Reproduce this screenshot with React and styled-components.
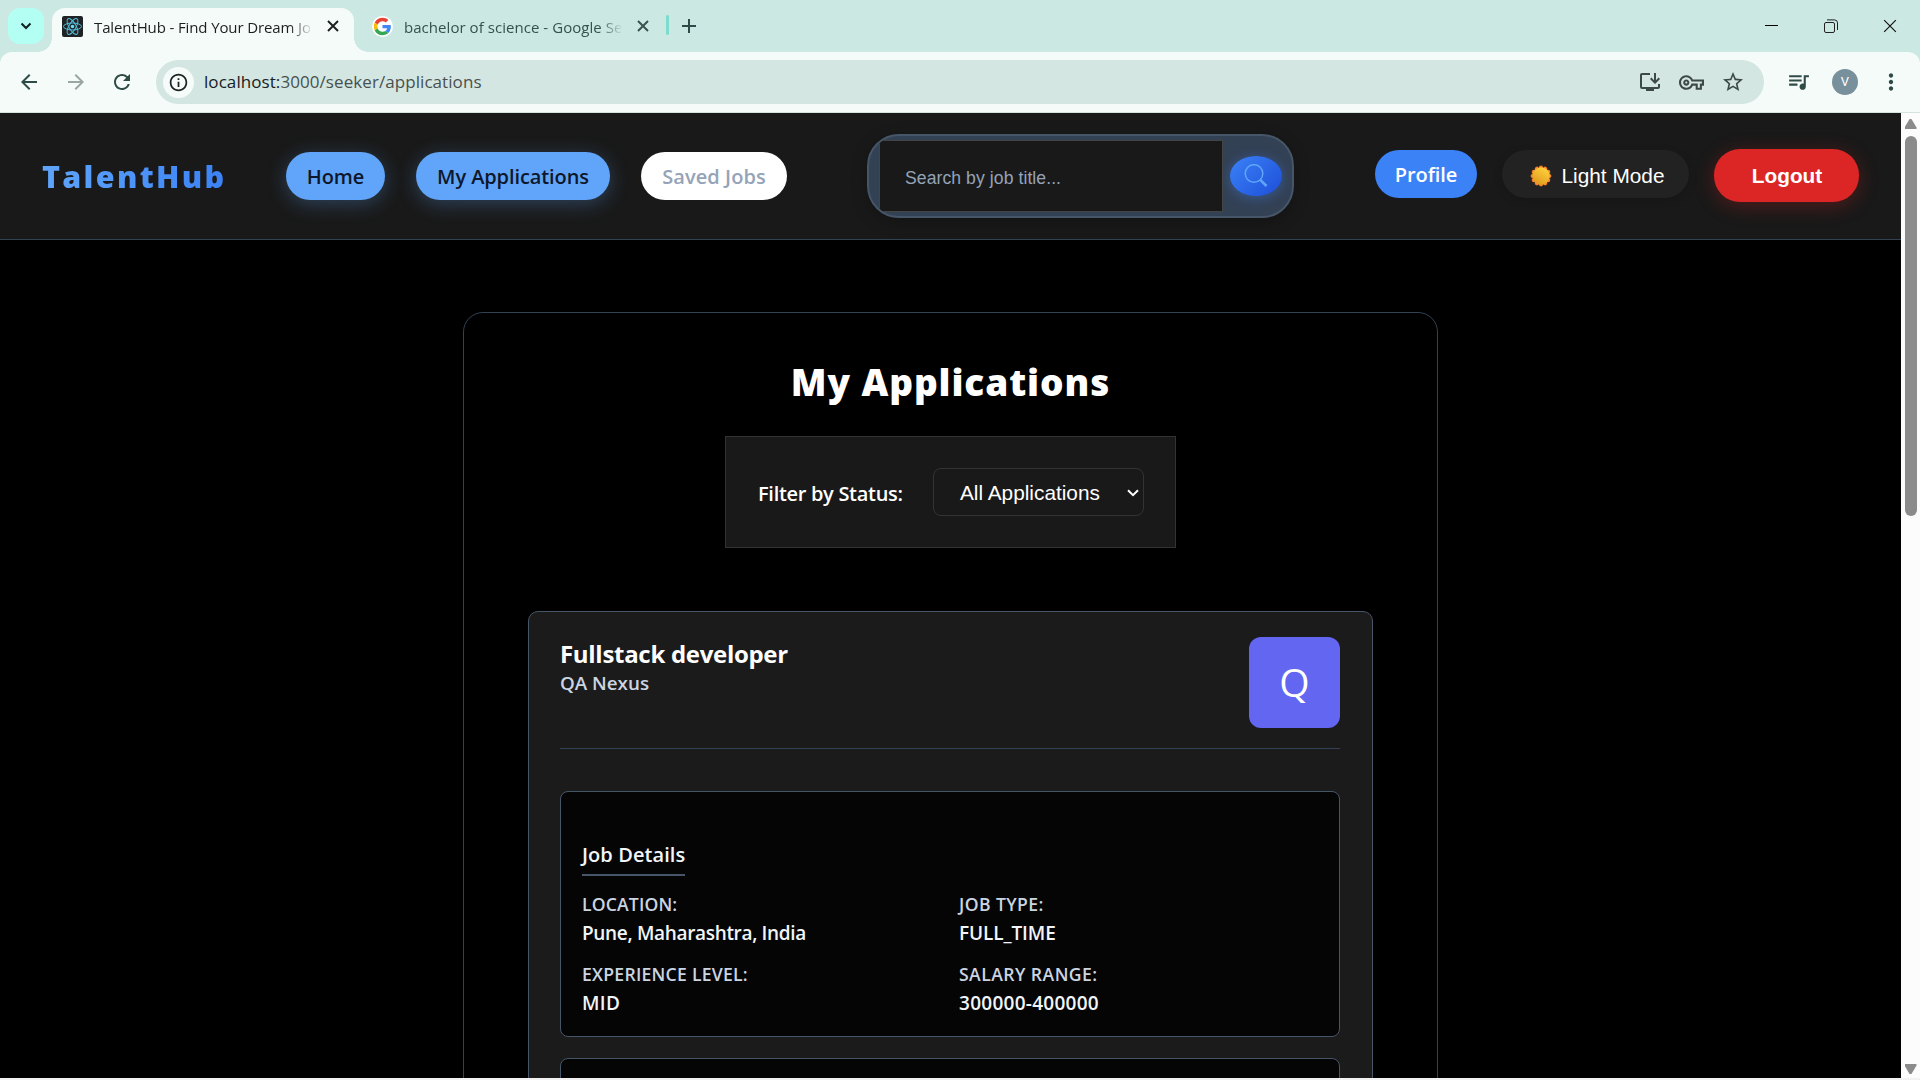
import React from "react";
import styled, { createGlobalStyle } from "styled-components";
import {
  MdArrowBack,
  MdArrowForward,
  MdRefresh,
  MdInfoOutline,
  MdInstallDesktop,
  MdOutlineVpnKey,
  MdStarBorder,
  MdQueueMusic,
  MdMoreVert,
} from "react-icons/md";

const ui = `"Segoe UI", "Open Sans", "Noto Sans", sans-serif`;
const arial = `Arial, "Liberation Sans", sans-serif`;

const GlobalStyle = createGlobalStyle`
  * { box-sizing: border-box; }
  html, body { margin: 0; padding: 0; overflow: hidden; }
  body { font-family: ${ui}; background: #f2f2f2; }
  button, input { font: inherit; margin: 0; }
  svg { display: block; flex: none; }
`;

const Window = styled.div`
  display: flex;
  flex-direction: column;
  width: 1920px;
  height: 1080px;
  overflow: hidden;
  background: #cce8e2;
`;

/* ---- tab strip ---- */
const TabStrip = styled.div`
  display: flex;
  align-items: flex-start;
  height: 52px;
  padding: 8px 0 0 8px;
  background: #cce8e2;
`;
const TabSearch = styled.button`
  display: grid;
  place-items: center;
  width: 36px;
  height: 36px;
  border: 0;
  padding: 0;
  border-radius: 12px;
  background: #b3fff3;
`;
const Tab = styled.div`
  position: relative;
  display: flex;
  align-items: center;
  height: ${(p) => (p.$active ? 44 : 36)}px;
  width: ${(p) => (p.$active ? 302 : 312)}px;
  margin-left: ${(p) => (p.$active ? 8 : 0)}px;
  padding: ${(p) => (p.$active ? "0 0 8px 10px" : "0 0 0 18px")};
  border-radius: 13px 13px 0 0;
  color: ${(p) => (p.$active ? "#1b1f1e" : "#37514c")};
  background: ${(p) => (p.$active ? "#f5fbf9" : "transparent")};
  &::before,
  &::after {
    content: "";
    display: ${(p) => (p.$active ? "block" : "none")};
    position: absolute;
    bottom: 0;
    width: 14px;
    height: 14px;
  }
  &::before {
    left: -14px;
    background: radial-gradient(circle at 0 0, transparent 13.5px, #f5fbf9 14px);
  }
  &::after {
    right: -14px;
    background: radial-gradient(circle at 100% 0, transparent 13.5px, #f5fbf9 14px);
  }
`;
const TabTitle = styled.span`
  width: 217px;
  margin: 1px 16px 0 11px;
  overflow: hidden;
  white-space: nowrap;
  font-size: 15px;
  line-height: 22px;
  letter-spacing: ${(p) => p.$tracking}px;
  mask-image: linear-gradient(90deg, #000 195px, transparent 219px);
`;
const TabDivider = styled.div`
  width: 3px;
  height: 20px;
  margin: 7px 0 0 0;
  border-radius: 2px;
  background: #7bdccf;
`;
const NewTab = styled.div`
  margin: 11px 0 0 13px;
`;
const WindowButtons = styled.div`
  display: flex;
  align-items: center;
  gap: 45.5px;
  margin: 11px 23px 0 auto;
`;

/* ---- toolbar ---- */
const Toolbar = styled.div`
  display: flex;
  align-items: center;
  height: 61px;
  padding: 0 0 1px 17px;
  border-radius: 12px 12px 0 0;
  border-bottom: 1px solid #d5e3e0;
  background: #f5fbf9;
  color: #2f4b47;
`;
const NavIcons = styled.div`
  display: flex;
  align-items: center;
  gap: 22.5px;
  width: 139px;
`;
const AddressBar = styled.div`
  display: flex;
  align-items: center;
  width: 1608px;
  height: 44px;
  padding: 1px 19px 0 7px;
  border-radius: 22px;
  background: #d3e6e1;
  color: #3c4947;
`;
const SiteInfo = styled.span`
  display: grid;
  place-items: center;
  width: 31px;
  height: 31px;
  border-radius: 50%;
  background: #f5fbf9;
  color: #1c2423;
`;
const Url = styled.span`
  margin-left: 10px;
  font-size: 17px;
  line-height: 24px;
  letter-spacing: 0.07px;
  color: #48514f;
  b {
    font-weight: 400;
    color: #16201e;
  }
`;
const AddressActions = styled.div`
  display: flex;
  align-items: center;
  gap: 17px;
  margin-left: auto;
`;
const Avatar = styled.span`
  display: grid;
  place-items: center;
  width: 26px;
  height: 26px;
  margin: 0 20px 0 21px;
  border-radius: 50%;
  background: #78909c;
  color: #fff;
  font: 13px/26px Roboto, sans-serif;
`;
const MusicIcon = styled(MdQueueMusic)`
  margin-left: 22px;
`;

/* ---- page area ---- */
const Viewport = styled.div`
  display: flex;
  height: 965px;
`;
const Page = styled.div`
  display: flex;
  flex-direction: column;
  width: 1901px;
  overflow: hidden;
  background: #000;
`;
const ScrollBar = styled.div`
  display: flex;
  flex-direction: column;
  align-items: center;
  width: 19px;
  padding: 6px 0 4px;
  background: #fcfcfc;
`;
const Arrow = styled.div`
  width: 12px;
  height: 10px;
  background: #8b8b8b;
  clip-path: ${(p) =>
    p.$down
      ? "polygon(0 0, 100% 0, 100% 15%, 58% 100%, 42% 100%, 0 15%)"
      : "polygon(42% 0, 58% 0, 100% 85%, 100% 100%, 0 100%, 0 85%)"};
`;
const Thumb = styled.div`
  width: 12px;
  height: 380px;
  margin: 7px 0 auto;
  border-radius: 6px;
  background: #8b8b8b;
`;
const WindowEdge = styled.div`
  height: 2px;
  background: #f2f2f2;
`;

/* ---- site header ---- */
const Header = styled.header`
  display: flex;
  align-items: center;
  height: 127px;
  flex: none;
  padding: 0 42px;
  border-bottom: 1px solid #334155;
  background: #191919;
`;
const Logo = styled.div`
  width: 244px;
  font-size: 30.5px;
  font-weight: 800;
  line-height: 44px;
  letter-spacing: 2.3px;
  span {
    background: linear-gradient(90deg, #60a5fa, #3b82f6);
    background-clip: text;
    -webkit-background-clip: text;
    color: transparent;
  }
`;
const NavPills = styled.nav`
  display: flex;
  gap: 31px;
`;
const NavPill = styled.a`
  display: flex;
  justify-content: center;
  width: ${(p) => p.$w}px;
  height: 48px;
  border-radius: 24px;
  font-size: 20px;
  font-weight: 600;
  line-height: 49px;
  white-space: nowrap;
  letter-spacing: ${(p) => p.$tracking}px;
  color: ${(p) => (p.$muted ? "#94a3b8" : "#0f172a")};
  background: ${(p) => (p.$muted ? "#fff" : "#60a5fa")};
  box-shadow: ${(p) => (p.$muted ? "none" : "0 4px 20px rgba(96, 165, 250, 0.3)")};
`;
const SearchBox = styled.div`
  display: flex;
  align-items: center;
  width: 427px;
  height: 84px;
  margin-left: 80px;
  padding: 0 9px 0 10px;
  border: 2px solid #475569;
  border-radius: 32px;
  overflow: hidden;
  background: #334155;
  box-shadow: 0 4px 16px rgba(0, 0, 0, 0.25);
`;
const SearchInput = styled.input`
  width: 344px;
  height: 72px;
  padding: 4px 25px 0;
  border: 1px solid #444;
  background: #191919;
  font-family: ${arial};
  font-size: 17.6px;
  letter-spacing: 0.07px;
  color: #fff;
  outline: none;
  &::placeholder {
    color: #94a3b8;
    opacity: 1;
  }
`;
const SearchButton = styled.button`
  display: grid;
  place-items: center;
  width: 52px;
  height: 40px;
  margin-left: 7px;
  padding: 0;
  border: 0;
  border-radius: 50%;
  background: linear-gradient(135deg, #3b82f6, #1d4ed8);
  box-shadow: 0 2px 12px rgba(59, 130, 246, 0.4);
`;
const HeaderActions = styled.div`
  display: flex;
  align-items: center;
  gap: 25px;
  margin-left: auto;
`;
const Profile = styled.a`
  width: 102px;
  height: 48px;
  margin-bottom: 4px;
  border-radius: 24px;
  text-align: center;
  font-size: 20px;
  font-weight: 600;
  line-height: 49px;
  letter-spacing: -0.1px;
  color: #fff;
  background: #3b82f6;
`;
const ThemeToggle = styled.button`
  display: flex;
  align-items: center;
  justify-content: center;
  gap: 10px;
  width: 187px;
  height: 48px;
  margin-bottom: 4px;
  padding: 4px 0 0 3px;
  border: 0;
  border-radius: 24px;
  font-family: ${arial};
  font-size: 20.8px;
  white-space: nowrap;
  color: #fff;
  background: #222;
  box-shadow: 0 2px 8px rgba(0, 0, 0, 0.15);
`;
const Logout = styled.button`
  width: 145px;
  height: 53px;
  margin-bottom: 1px;
  padding: 1px 0 0 1px;
  border: 0;
  border-radius: 26px;
  font-family: ${arial};
  font-size: 20.8px;
  font-weight: 700;
  color: #fff;
  background: #dc2626;
  box-shadow: 0 4px 20px rgba(220, 38, 38, 0.3);
`;

/* ---- applications ---- */
const Panel = styled.main`
  display: flex;
  flex-direction: column;
  align-items: center;
  width: 975px;
  height: 900px;
  flex: none;
  margin: 72px 0 0 463px;
  border: 1px solid #334155;
  border-radius: 20px;
`;
const PageTitle = styled.h1`
  margin: 41px 0 0;
  font-size: 37px;
  font-weight: 800;
  line-height: 56px;
  letter-spacing: 0.9px;
  color: #fff;
`;
const FilterBar = styled.div`
  display: flex;
  align-items: center;
  width: 451px;
  height: 112px;
  flex: none;
  margin-top: 26px;
  padding: 0 31px 0 32px;
  border: 1px solid #333;
  background: #191919;
`;
const FilterLabel = styled.label`
  width: 175px;
  padding-top: 2px;
  font-size: 20px;
  font-weight: 600;
  white-space: nowrap;
  letter-spacing: -0.3px;
  color: #fff;
`;
const FilterSelect = styled.div`
  display: flex;
  align-items: center;
  justify-content: space-between;
  width: 211px;
  height: 48px;
  padding: 2px 4px 0 26px;
  border: 1px solid #333;
  border-radius: 8px;
  font-family: ${arial};
  font-size: 20.8px;
  white-space: nowrap;
  color: #fff;
`;
const Card = styled.article`
  width: 845px;
  height: 600px;
  flex: none;
  margin-top: 63px;
  padding: 25px 32px 0 31px;
  border: 1px solid #475569;
  border-radius: 10px;
  background: #1b1b1b;
`;
const CardHead = styled.div`
  display: flex;
  justify-content: space-between;
  height: 112px;
  border-bottom: 1px solid #334155;
`;
const JobTitle = styled.h2`
  margin: 1px 0 0;
  font-size: 24px;
  font-weight: 700;
  line-height: 32px;
  letter-spacing: -0.3px;
  color: #fff;
`;
const Company = styled.div`
  font-size: 18.8px;
  font-weight: 600;
  line-height: 26px;
  color: #cbd5e1;
`;
const CompanyBadge = styled.div`
  width: 91px;
  height: 91px;
  border-radius: 12px;
  text-align: center;
  font-size: 39px;
  line-height: 90px;
  color: #fff;
  background: #6366f1;
`;
const DetailBox = styled.section`
  display: flex;
  flex-direction: column;
  align-items: flex-start;
  width: 780px;
  height: 246px;
  margin-top: ${(p) => p.$gap}px;
  padding: 48px 21px 0;
  border: 1px solid #475569;
  border-radius: 8px;
  background: #050505;
`;
const DetailTitle = styled.h3`
  height: 36px;
  margin: 0;
  border-bottom: 2px solid #475569;
  font-size: 20px;
  font-weight: 600;
  line-height: 30px;
  letter-spacing: 0.08px;
  color: #f1f5f9;
`;
const DetailGrid = styled.div`
  display: grid;
  grid-template-columns: 377px 360px;
  grid-auto-rows: 70px;
  margin-top: 14px;
`;
const DetailLabel = styled.div`
  font-size: 17.6px;
  font-weight: 600;
  line-height: 28px;
  letter-spacing: ${(p) => p.$tracking}px;
  color: #cbd5e1;
`;
const DetailValue = styled.div`
  font-size: 19px;
  font-weight: 600;
  line-height: 30px;
  letter-spacing: ${(p) => p.$tracking}px;
  color: #f1f5f9;
`;

const Cross = ({ size = 12, width = 1.9, color = "currentColor" }) => (
  <svg width={size} height={size} viewBox="0 0 12 12" stroke={color} strokeWidth={width} fill="none">
    <path d="M1 1l10 10M11 1L1 11" />
  </svg>
);

const ReactLogo = () => (
  <svg width="21" height="21" viewBox="0 0 21 21">
    <rect width="21" height="21" rx="2" fill="#1f2326" />
    <g fill="none" stroke="#53bcd8" strokeWidth="1">
      <ellipse cx="10.5" cy="10.5" rx="9" ry="3.5" />
      <ellipse cx="10.5" cy="10.5" rx="9" ry="3.5" transform="rotate(60 10.5 10.5)" />
      <ellipse cx="10.5" cy="10.5" rx="9" ry="3.5" transform="rotate(120 10.5 10.5)" />
    </g>
    <circle cx="10.5" cy="10.5" r="1.8" fill="#61dafb" />
  </svg>
);

const GoogleLogo = () => (
  <svg width="21" height="21" viewBox="-5 -5 58 58">
    <circle cx="24" cy="24" r="29" fill="#fff" />
    <path fill="#EA4335" d="M24 9.5c3.54 0 6.71 1.22 9.21 3.6l6.85-6.85C35.9 2.38 30.47 0 24 0 14.62 0 6.51 5.38 2.56 13.22l7.98 6.19C12.43 13.72 17.74 9.5 24 9.5z" />
    <path fill="#4285F4" d="M46.98 24.55c0-1.57-.15-3.09-.38-4.55H24v9.02h12.94c-.58 2.96-2.26 5.48-4.78 7.18l7.73 6c4.51-4.18 7.09-10.36 7.09-17.65z" />
    <path fill="#FBBC05" d="M10.53 28.59c-.48-1.45-.76-2.99-.76-4.59s.27-3.14.76-4.59l-7.98-6.19C.92 16.46 0 20.12 0 24c0 3.88.92 7.54 2.56 10.78l7.97-6.19z" />
    <path fill="#34A853" d="M24 48c6.48 0 11.93-2.13 15.89-5.81l-7.73-6c-2.15 1.45-4.92 2.3-8.16 2.3-6.26 0-11.57-4.22-13.47-9.91l-7.98 6.19C6.51 42.62 14.62 48 24 48z" />
  </svg>
);

const SunIcon = () => (
  <svg width="22" height="22" viewBox="-11 -11 22 22">
    <defs>
      <linearGradient id="sun" x1="0.8" y1="0" x2="0.2" y2="1">
        <stop offset="0" stopColor="#ffd43b" />
        <stop offset="1" stopColor="#e0981f" />
      </linearGradient>
    </defs>
    <g fill="#f5812a">
      {Array.from({ length: 12 }, (_, i) => (
        <circle key={i} cx="0" cy="-8.3" r="2.1" transform={`rotate(${i * 30})`} />
      ))}
    </g>
    <circle r="8.7" fill="url(#sun)" />
  </svg>
);

const details = [
  ["LOCATION:", "Pune, Maharashtra, India", 0.15, -0.33],
  ["JOB TYPE:", "FULL_TIME", 0.4, -0.1],
  ["EXPERIENCE LEVEL:", "MID", 0.25, 0.3],
  ["SALARY RANGE:", "300000-400000", 0.45, 0.27],
];

export default function App() {
  return (
    <Window>
      <GlobalStyle />
      <TabStrip>
        <TabSearch>
          <svg width="12" height="8" viewBox="0 0 12 8" fill="none" stroke="#12201e" strokeWidth="2">
            <path d="M1.5 1.5L6 6l4.5-4.5" />
          </svg>
        </TabSearch>
        <Tab $active>
          <ReactLogo />
          <TabTitle $tracking={-0.12}>TalentHub - Find Your Dream Job</TabTitle>
          <Cross />
        </Tab>
        <Tab>
          <GoogleLogo />
          <TabTitle $tracking={0.05}>bachelor of science - Google Search</TabTitle>
          <Cross />
        </Tab>
        <TabDivider />
        <NewTab>
          <svg width="14" height="14" viewBox="0 0 14 14" stroke="#2f4b47" strokeWidth="2">
            <path d="M7 0v14M0 7h14" />
          </svg>
        </NewTab>
        <WindowButtons>
          <svg width="13" height="13" viewBox="0 0 13 13" stroke="#000" fill="none">
            <path d="M0 5.5h13" />
          </svg>
          <svg width="14" height="14" viewBox="0 0 14 14" stroke="#222" fill="none">
            <rect x="0.5" y="3.5" width="10" height="10" rx="1.5" />
            <path d="M3 .9h7.5a3 3 0 0 1 3 3V11" />
          </svg>
          <Cross size={14} width={1} color="#111" />
        </WindowButtons>
      </TabStrip>

      <Toolbar>
        <NavIcons>
          <MdArrowBack size={24} />
          <MdArrowForward size={24} color="#9aa6a4" />
          <MdRefresh size={24} />
        </NavIcons>
        <AddressBar>
          <SiteInfo>
            <MdInfoOutline size={21} />
          </SiteInfo>
          <Url>
            <b>localhost:</b>3000/seeker/applications
          </Url>
          <AddressActions>
            <MdInstallDesktop size={24} />
            <MdOutlineVpnKey size={25} />
            <MdStarBorder size={24} />
          </AddressActions>
        </AddressBar>
        <MusicIcon size={25} />
        <Avatar>V</Avatar>
        <MdMoreVert size={26} />
      </Toolbar>

      <Viewport>
        <Page>
          <Header>
            <Logo>
              <span>TalentHub</span>
            </Logo>
            <NavPills>
              <NavPill $w={99} $tracking={-0.1}>Home</NavPill>
              <NavPill $w={194} $tracking={-0.1}>My Applications</NavPill>
              <NavPill $w={146} $tracking={0.05} $muted>Saved Jobs</NavPill>
            </NavPills>
            <SearchBox>
              <SearchInput placeholder="Search by job title..." />
              <SearchButton>
                <svg width="24" height="24" viewBox="0 0 24 24" fill="none" stroke="#60a5fa">
                  <circle cx="10" cy="9.5" r="8.8" strokeWidth="1.5" />
                  <path d="M16.3 15.8l6.2 6.2" strokeWidth="2.6" />
                </svg>
              </SearchButton>
            </SearchBox>
            <HeaderActions>
              <Profile>Profile</Profile>
              <ThemeToggle>
                <SunIcon />
                Light Mode
              </ThemeToggle>
              <Logout>Logout</Logout>
            </HeaderActions>
          </Header>

          <Panel>
            <PageTitle>My Applications</PageTitle>
            <FilterBar>
              <FilterLabel>Filter by Status:</FilterLabel>
              <FilterSelect>
                All Applications
                <svg width="12" height="8" viewBox="0 0 12 8" fill="none" stroke="#fff" strokeWidth="2">
                  <path d="M1 1.2l5 5 5-5" />
                </svg>
              </FilterSelect>
            </FilterBar>
            <Card>
              <CardHead>
                <div>
                  <JobTitle>Fullstack developer</JobTitle>
                  <Company>QA Nexus</Company>
                </div>
                <CompanyBadge>Q</CompanyBadge>
              </CardHead>
              <DetailBox $gap={42}>
                <DetailTitle>Job Details</DetailTitle>
                <DetailGrid>
                  {details.map(([label, value, labelTracking, valueTracking]) => (
                    <div key={label}>
                      <DetailLabel $tracking={labelTracking}>{label}</DetailLabel>
                      <DetailValue $tracking={valueTracking}>{value}</DetailValue>
                    </div>
                  ))}
                </DetailGrid>
              </DetailBox>
              <DetailBox $gap={21} />
            </Card>
          </Panel>
        </Page>
        <ScrollBar>
          <Arrow />
          <Thumb />
          <Arrow $down />
        </ScrollBar>
      </Viewport>
      <WindowEdge />
    </Window>
  );
}
